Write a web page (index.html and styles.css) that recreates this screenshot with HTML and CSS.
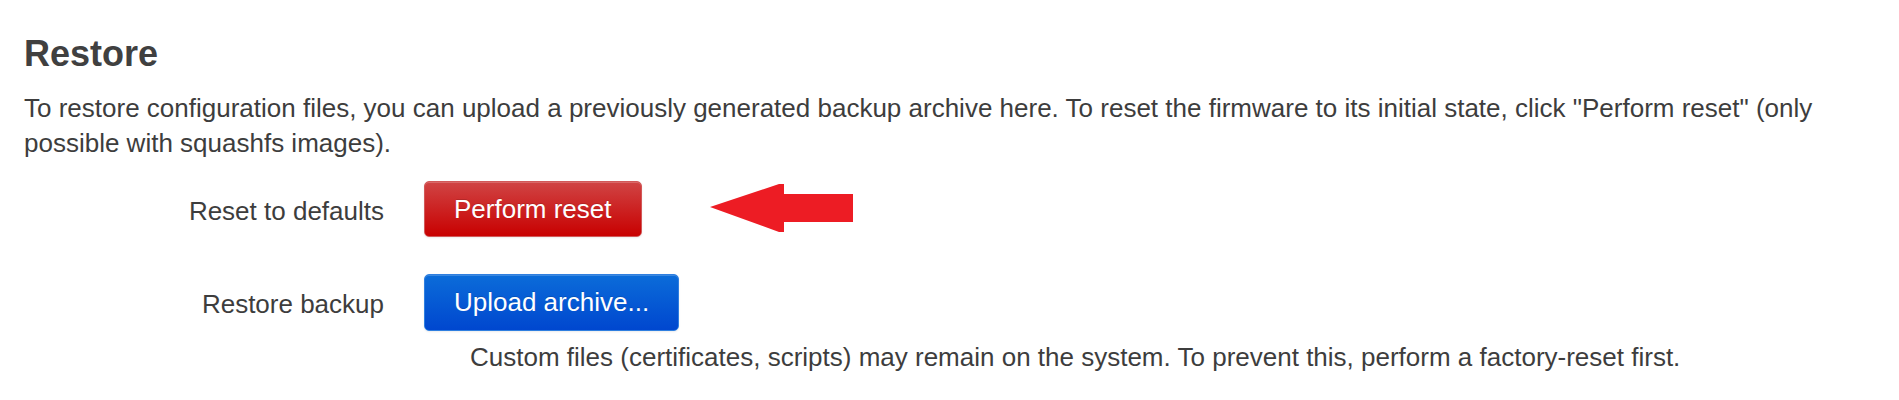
FILE: index.html
```html
<!DOCTYPE html>
<html>
<head>
<meta charset="utf-8">
<link rel="stylesheet" href="styles.css">
</head>
<body>
<div class="section">
  <h3 class="title">Restore</h3>
  <p class="intro">To restore configuration files, you can upload a previously generated backup archive here. To reset the firmware to its initial state, click "Perform reset" (only possible with squashfs images).</p>
  <div class="row row-reset">
    <div class="label">Reset to defaults</div>
    <button class="btn btn-red">Perform reset</button>
    <svg class="arrow" width="144" height="50" viewBox="0 0 144 50">
      <polygon points="0,23 69,0 74,0 74,10 143,10 143,38 74,38 74,48 69,48" fill="#ed1c24"/>
    </svg>
  </div>
  <div class="row row-upload">
    <div class="label">Restore backup</div>
    <button class="btn btn-blue">Upload archive...</button>
  </div>
  <div class="desc">Custom files (certificates, scripts) may remain on the system. To prevent this, perform a factory-reset first.</div>
</div>
</body>
</html>
```

FILE: styles.css
```css
html, body {
  margin: 0;
  padding: 0;
  background: #ffffff;
}
body {
  font-family: "Liberation Sans", Arial, sans-serif;
  color: #3d3d3d;
}
.section {
  padding: 33px 24px 0 24px;
}
.title {
  margin: 0;
  font-size: 36px;
  line-height: 42px;
  font-weight: bold;
  color: #404040;
}
.intro {
  margin: 16px 0 0 0;
  font-size: 26px;
  line-height: 35px;
}
.row {
  display: flex;
  align-items: center;
}
.row-reset {
  margin-top: 20px;
}
.row-upload {
  margin-top: 37px;
}
.label {
  width: 360px;
  text-align: right;
  font-size: 26px;
  padding-top: 4px;
  margin-right: 40px;
  white-space: nowrap;
}
.btn {
  box-sizing: border-box;
  height: 56px;
  padding: 0 29px;
  font-family: "Liberation Sans", Arial, sans-serif;
  font-size: 26px;
  white-space: nowrap;
  color: #ffffff;
  border-radius: 5px;
  border: 1px solid;
  text-shadow: 0 -1px 0 rgba(0,0,0,0.15);
  box-shadow: inset 0 1px 0 rgba(255,255,255,0.2), 0 1px 2px rgba(0,0,0,0.08);
}
.btn-red {
  background: linear-gradient(to bottom, #d04444, #c80000);
  border-color: #d25858;
}
.btn-blue {
  height: 57px;
  background: linear-gradient(to bottom, #0b6cd9, #0047cf);
  border-color: #2f7fe0;
}
.arrow {
  display: block;
  margin-left: 68px;
}
.desc {
  margin: 9px 0 0 446px;
  font-size: 26px;
  line-height: 35px;
}
```
